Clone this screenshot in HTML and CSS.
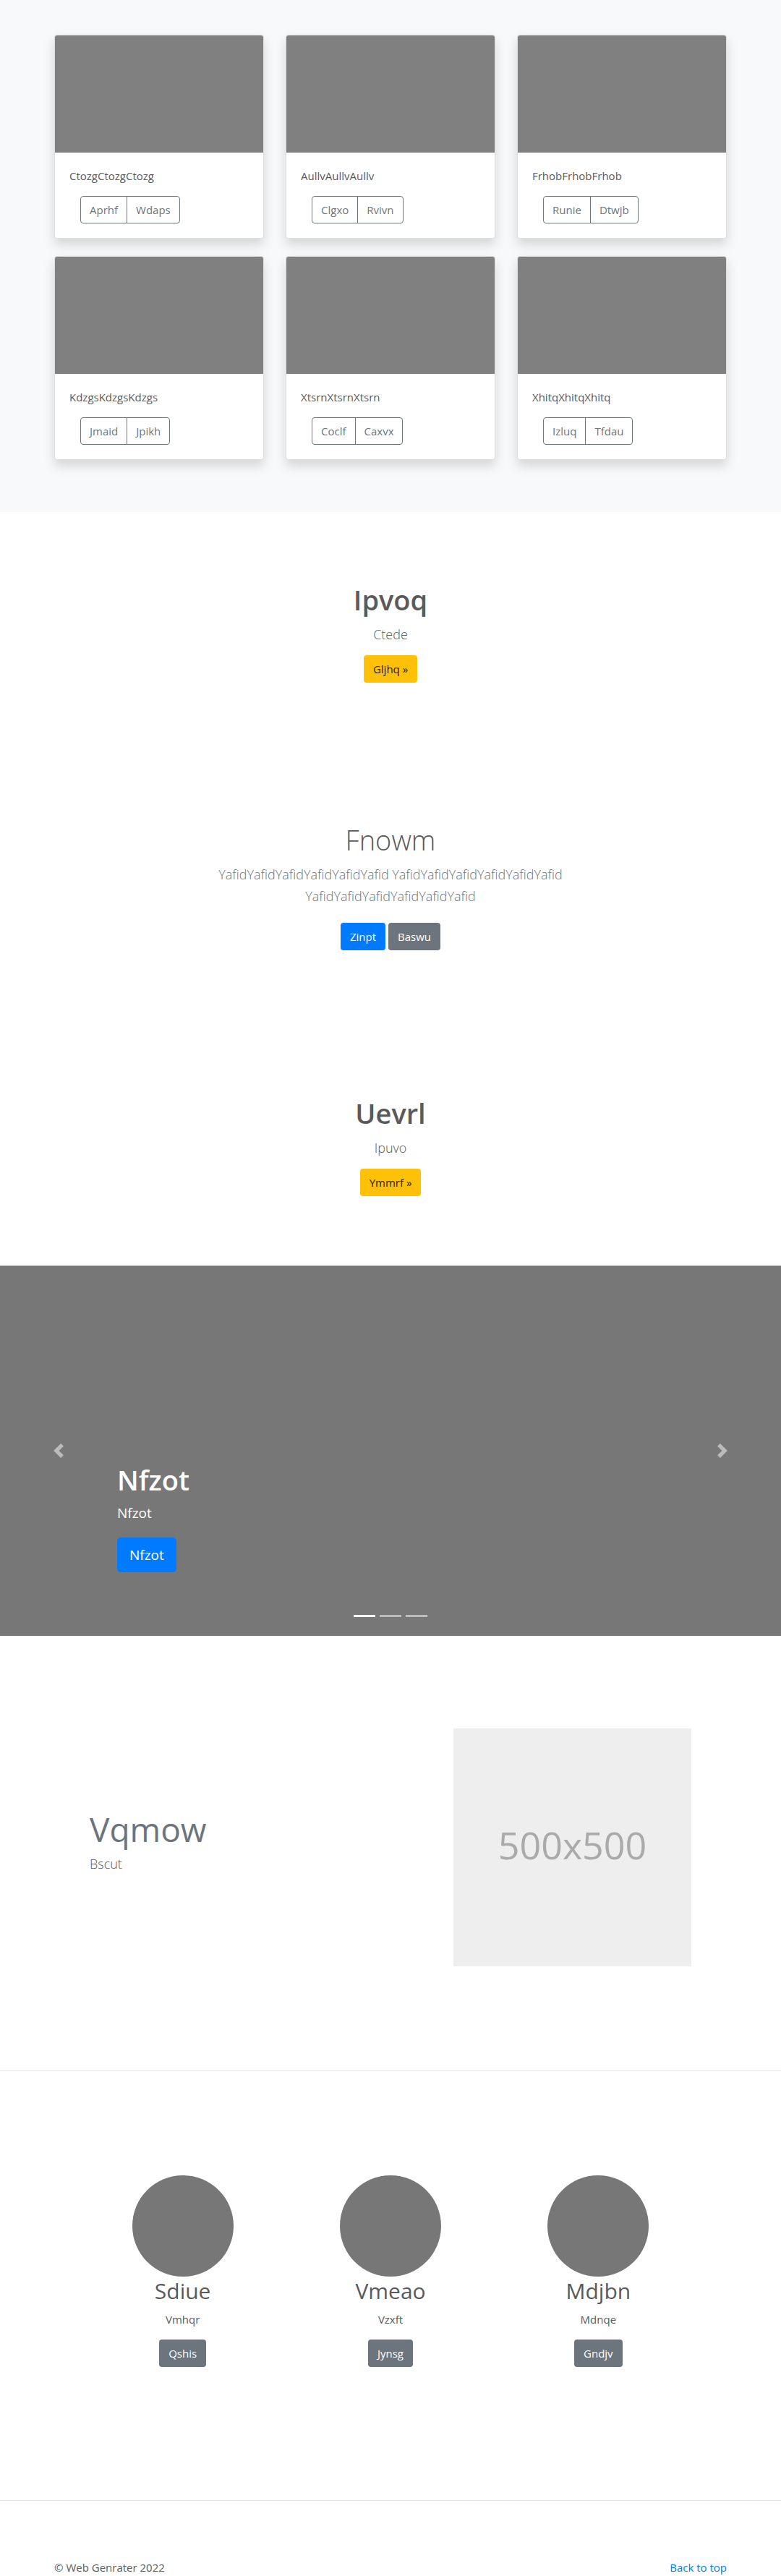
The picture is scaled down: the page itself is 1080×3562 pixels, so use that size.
FILE: index.html
```html
<!DOCTYPE html>
<html lang="en">
<head>
<meta charset="utf-8">
<meta name="viewport" content="width=device-width, initial-scale=1">
<title>Web Genrater</title>
<link rel="stylesheet" href="styles.css">
</head>
<body>
<main>
  <section class="album">
    <div class="container album-grid">
      <article class="card">
        <div class="card-image"></div>
        <div class="card-body">
          <p>CtozgCtozgCtozg</p>
          <div class="btn-group"><button type="button">Aprhf</button><button type="button">Wdaps</button></div>
        </div>
      </article>
      <article class="card">
        <div class="card-image"></div>
        <div class="card-body">
          <p>AullvAullvAullv</p>
          <div class="btn-group"><button type="button">Clgxo</button><button type="button">Rvivn</button></div>
        </div>
      </article>
      <article class="card">
        <div class="card-image"></div>
        <div class="card-body">
          <p>FrhobFrhobFrhob</p>
          <div class="btn-group"><button type="button">Runie</button><button type="button">Dtwjb</button></div>
        </div>
      </article>
      <article class="card">
        <div class="card-image"></div>
        <div class="card-body">
          <p>KdzgsKdzgsKdzgs</p>
          <div class="btn-group"><button type="button">Jmaid</button><button type="button">Jpikh</button></div>
        </div>
      </article>
      <article class="card">
        <div class="card-image"></div>
        <div class="card-body">
          <p>XtsrnXtsrnXtsrn</p>
          <div class="btn-group"><button type="button">Coclf</button><button type="button">Caxvx</button></div>
        </div>
      </article>
      <article class="card">
        <div class="card-image"></div>
        <div class="card-body">
          <p>XhitqXhitqXhitq</p>
          <div class="btn-group"><button type="button">Izluq</button><button type="button">Tfdau</button></div>
        </div>
      </article>
    </div>
  </section>

  <section class="banner">
    <h1>Ipvoq</h1>
    <p class="lead">Ctede</p>
    <div class="actions"><a class="btn btn-warning" href="#">Gljhq »</a></div>
  </section>

  <section class="banner banner-light">
    <h1>Fnowm</h1>
    <p class="lead muted">YafidYafidYafidYafidYafidYafid YafidYafidYafidYafidYafidYafid YafidYafidYafidYafidYafidYafid</p>
    <div class="actions"><a class="btn btn-primary" href="#">Zinpt</a><a class="btn btn-secondary" href="#">Baswu</a></div>
  </section>

  <section class="banner">
    <h1>Uevrl</h1>
    <p class="lead">Ipuvo</p>
    <div class="actions"><a class="btn btn-warning" href="#">Ymmrf »</a></div>
  </section>

  <section class="carousel">
    <button class="carousel-control" type="button" aria-label="Previous">
      <svg viewBox="0 0 8 8" width="20" height="20" fill="#fff"><path d="M5.25 0l-4 4 4 4 1.5-1.5L4.25 4l2.5-2.5L5.25 0z"/></svg>
    </button>
    <div class="carousel-caption">
      <h1>Nfzot</h1>
      <p>Nfzot</p>
      <a class="btn btn-primary btn-lg" href="#">Nfzot</a>
    </div>
    <button class="carousel-control" type="button" aria-label="Next">
      <svg viewBox="0 0 8 8" width="20" height="20" fill="#fff"><path d="M2.75 0l-1.5 1.5L3.75 4l-2.5 2.5L2.75 8l4-4-4-4z"/></svg>
    </button>
    <div class="carousel-indicators"><span class="active"></span><span></span><span></span></div>
  </section>

  <section class="container featurette">
    <div class="featurette-text">
      <h2>Vqmow</h2>
      <p class="lead">Bscut</p>
    </div>
    <div class="placeholder">500x500</div>
  </section>

  <hr>

  <section class="container team">
    <div class="member">
      <div class="avatar"></div>
      <h2>Sdiue</h2>
      <p>Vmhqr</p>
      <a class="btn btn-secondary" href="#">Qshis</a>
    </div>
    <div class="member">
      <div class="avatar"></div>
      <h2>Vmeao</h2>
      <p>Vzxft</p>
      <a class="btn btn-secondary" href="#">Jynsg</a>
    </div>
    <div class="member">
      <div class="avatar"></div>
      <h2>Mdjbn</h2>
      <p>Mdnqe</p>
      <a class="btn btn-secondary" href="#">Gndjv</a>
    </div>
  </section>

  <hr>
</main>
<footer class="container footer">
  <span>© Web Genrater 2022</span>
  <a href="#">Back to top</a>
</footer>
</body>
</html>
```
FILE: styles.css
```css
*, *::before, *::after { box-sizing: border-box; }

body {
  margin: 0;
  background: #fff;
  color: #5a5a5a;
  font-family: "Segoe UI", "Open Sans", "Noto Sans", sans-serif;
  font-size: 15px;
  line-height: 24px;
}

h1, h2, p { margin: 0; }
a { color: #007bff; text-decoration: none; }

hr {
  margin: 0;
  border: 0;
  border-top: 1px solid rgba(0, 0, 0, .1);
}

.container {
  width: 100%;
  max-width: 960px;
  margin: 0 auto;
  padding: 0 15px;
}

.lead {
  font-size: 18px;
  font-weight: 300;
  line-height: 30px;
}
.muted { color: #6c757d; }

/* Buttons */
.btn {
  display: inline-block;
  padding: 6px 12px;
  border: 1px solid transparent;
  border-radius: 4px;
  line-height: 24px;
  color: #fff;
}
.btn-primary { background: #007bff; }
.btn-secondary { background: #6c757d; }
.btn-warning { background: #ffc107; color: #212529; }
.btn-lg {
  padding: 8px 16px;
  border-radius: 5px;
  font-size: 19px;
  line-height: 30px;
}

.btn-group { display: flex; padding-left: 15px; }
.btn-group button {
  padding: 6px 12px;
  border: 1px solid #6c757d;
  border-radius: 4px;
  background: transparent;
  color: #6c757d;
  font: inherit;
}
.btn-group button:first-child { border-radius: 4px 0 0 4px; }
.btn-group button:last-child {
  margin-left: -1px;
  border-radius: 0 4px 4px 0;
}

/* Album */
.album { padding: 48px 0 72px; background: #f8f9fa; }
.album-grid {
  display: grid;
  grid-template-columns: repeat(3, 1fr);
  gap: 24px 30px;
}
.card {
  border: 1px solid rgba(0, 0, 0, .125);
  border-radius: 4px;
  background: #fff;
  box-shadow: 0 8px 16px rgba(0, 0, 0, .15);
}
.card-image {
  height: 162px;
  border-radius: 3px 3px 0 0;
  background: #808080;
}
.card-body { padding: 20px; }
.card-body p { margin-bottom: 16px; }

/* Banners */
.banner { padding: 96px 15px; text-align: center; }
.banner h1 {
  margin-bottom: 8px;
  font-size: 38px;
  font-weight: 600;
  line-height: 50px;
}
.banner .lead { max-width: 510px; margin: 0 auto 14px; }
.banner-light h1 { font-weight: 300; }
.actions { display: flex; justify-content: center; gap: 4px; }
.banner-light .actions { padding: 8px 0; }

/* Carousel */
.carousel {
  position: relative;
  display: grid;
  grid-template-columns: 15% 1fr 15%;
  min-height: 512px;
  background: #777;
  color: #fff;
}
.carousel-control {
  display: flex;
  align-items: center;
  justify-content: center;
  padding: 0;
  border: 0;
  background: none;
  opacity: .5;
}
.carousel-caption { align-self: end; padding-bottom: 88px; }
.carousel-caption h1 {
  margin-bottom: 8px;
  font-size: 38px;
  font-weight: 600;
  line-height: 48px;
}
.carousel-caption p { margin-bottom: 20px; font-size: 19px; line-height: 28px; }
.carousel-caption .btn { display: block; width: fit-content; }
.carousel-indicators {
  position: absolute;
  right: 0;
  bottom: 26px;
  left: 0;
  display: flex;
  justify-content: center;
  gap: 6px;
}
.carousel-indicators span { width: 30px; height: 3px; background: #fff; opacity: .5; }
.carousel-indicators .active { opacity: 1; }

/* Featurette */
.featurette {
  display: grid;
  grid-template-columns: 473fr 329fr;
  gap: 30px;
  padding: 128px 64px 144px;
}
.featurette-text { padding-top: 114px; }
.featurette h2 {
  margin-bottom: 8px;
  color: #6c757d;
  font-size: 46px;
  font-weight: 400;
  line-height: 50px;
}
.placeholder {
  display: flex;
  align-items: center;
  justify-content: center;
  aspect-ratio: 1;
  padding-bottom: 8px;
  background: #eee;
  color: #aaa;
  font-size: 52px;
}

/* Team */
.team {
  display: grid;
  grid-template-columns: repeat(3, 1fr);
  padding: 144px 49px 184px;
  text-align: center;
}
.avatar {
  width: 140px;
  height: 140px;
  margin: 0 auto;
  border-radius: 50%;
  background: #777;
}
.member h2 {
  margin-bottom: 8px;
  font-size: 30px;
  font-weight: 400;
  line-height: 39px;
}
.member p { margin-bottom: 16px; }

.footer {
  display: flex;
  justify-content: space-between;
  padding-top: 80px;
}
```
